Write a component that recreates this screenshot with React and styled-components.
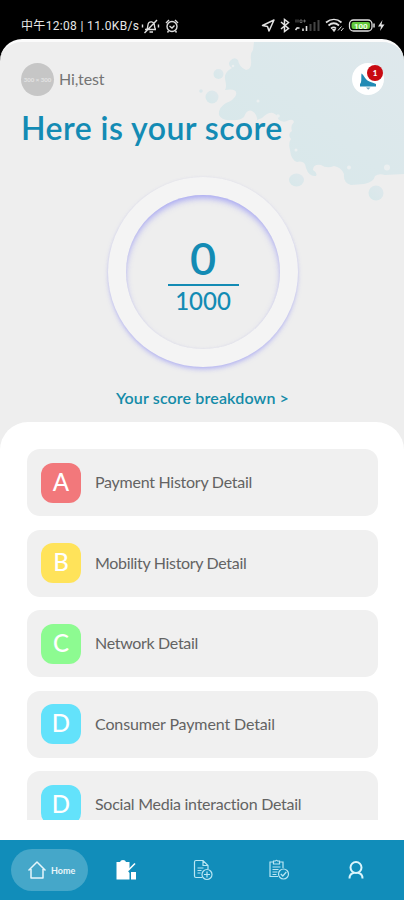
import React from 'react'
import styled, { createGlobalStyle } from 'styled-components'

const GlobalStyle = createGlobalStyle`
  * {
    box-sizing: border-box;
  }
  body {
    margin: 0;
    background: #000;
    font-family: Lato, "Noto Sans CJK SC", sans-serif;
    font-variant-ligatures: none;
  }
`

const Phone = styled.div`
  width: 404px;
  height: 900px;
  display: flex;
  flex-direction: column;
  overflow: hidden;
  background: #000;
`

const StatusBar = styled.header`
  height: 39px;
  flex: none;
  display: flex;
  align-items: center;
  justify-content: space-between;
  padding: 12px 18px 0 21px;
  color: #e6e6e6;
`

const StatusText = styled.span`
  width: 120px;
  font-family: Roboto, "Noto Sans CJK SC", sans-serif;
  font-size: 12px;
  line-height: 16px;
  letter-spacing: 0.33px;
  white-space: nowrap;
`

const StatusGroup = styled.div`
  display: flex;
  align-items: center;
  height: 18px;
`

const Screen = styled.main`
  position: relative;
  flex: 1;
  min-height: 0;
  display: flex;
  flex-direction: column;
  background: #eee;
  border-top: 3px solid #fbfbfb;
  border-radius: 22px 22px 0 0;
  overflow: hidden;
`

const Splash = styled.svg`
  position: absolute;
  top: 0;
  right: 0;
`

const Top = styled.section`
  position: relative;
  height: 380px;
  flex: none;
  display: flex;
  flex-direction: column;
`

const UserRow = styled.div`
  display: flex;
  align-items: center;
  height: 34px;
  margin: 20px 20px 0 21px;
`

const Avatar = styled.div`
  width: 33px;
  height: 33px;
  border-radius: 50%;
  background: #c6c6c6;
  color: #e4e4e4;
  display: flex;
  align-items: center;
  justify-content: center;
  font-size: 6px;
  font-weight: 700;
`

const Greeting = styled.span`
  margin: -2px 0 0 5px;
  flex: 1;
  color: #747474;
  font-size: 16px;
  letter-spacing: -0.15px;
`

const Bell = styled.div`
  position: relative;
  width: 32px;
  height: 32px;
  border-radius: 50%;
  background: #fff;
`

const BellIcon = styled.svg`
  display: block;
`

const Count = styled.span`
  position: absolute;
  top: 2px;
  right: 1px;
  width: 16px;
  height: 16px;
  border-radius: 50%;
  background: #c80a12;
  color: #fff;
  font-size: 8px;
  font-weight: 900;
  line-height: 16px;
  text-align: center;
`

const Title = styled.h1`
  margin: 12px 0 0 21px;
  color: #138bb4;
  font-size: 32px;
  line-height: 40px;
  font-weight: 600;
  letter-spacing: 0.46px;
  white-space: nowrap;
`

const Ring = styled.div`
  width: 190px;
  height: 190px;
  flex: none;
  margin: 29px 0 0 108px;
  padding: 18px;
  border-radius: 50%;
  background: #f4f4f4;
  box-shadow: 0 3px 5px -1px rgba(150, 150, 245, 0.7), 0 0 2px rgba(190, 190, 220, 0.25);
`

const RingInner = styled.div`
  width: 154px;
  height: 154px;
  border-radius: 50%;
  background: #eee;
  box-shadow: inset 0 4px 6px -1px rgba(150, 150, 245, 0.8), inset 0 0 2px rgba(190, 190, 220, 0.3);
  display: flex;
  flex-direction: column;
  align-items: center;
  color: #138bb4;
`

const Score = styled.div`
  margin-top: 37px;
  height: 52px;
  font-size: 45px;
  line-height: 52px;
  font-weight: 600;
`

const Total = styled.div`
  width: 71px;
  border-top: 2px solid #138bb4;
  padding-top: 2px;
  text-align: center;
  font-size: 24px;
  line-height: 26px;
  font-weight: 500;
`

const Breakdown = styled.div`
  margin: 21px 0 0 116px;
  color: #138ba8;
  font-size: 16px;
  line-height: 20px;
  font-weight: 600;
  letter-spacing: 0.14px;
  white-space: nowrap;
`

const Sheet = styled.section`
  position: relative;
  flex: 1;
  min-height: 0;
  padding: 27px 26px 20px 27px;
  background: #fff;
  border-radius: 28px 28px 0 0;
`

const List = styled.div`
  height: 371px;
  overflow: hidden;
  display: flex;
  flex-direction: column;
  gap: 13.5px;
`

const Card = styled.div`
  height: 67px;
  flex: none;
  display: flex;
  align-items: center;
  padding-left: 14px;
  border-radius: 13px;
  background: #f0f0f0;
`

const Grade = styled.div`
  width: 40px;
  height: 40px;
  border-radius: 12px;
  background: ${(props) => props.$color};
  color: #fff;
  font-size: 24px;
  line-height: 38px;
  font-weight: 500;
  text-align: center;
`

const CardLabel = styled.span`
  margin: -2px 0 0 14px;
  color: #636363;
  font-size: 16px;
  letter-spacing: ${(props) => props.$spacing};
  white-space: nowrap;
`

const NavBar = styled.nav`
  height: 60px;
  flex: none;
  display: flex;
  align-items: center;
  padding: 0 10px 0 11px;
  background: #118dba;
`

const HomeTab = styled.div`
  width: 77px;
  height: 42px;
  flex: none;
  display: flex;
  align-items: center;
  padding-left: 16px;
  gap: 4px;
  border-radius: 21px;
  background: #45a7c9;
  color: #eaf6fa;
  font-size: 9px;
  font-weight: 700;
`

const Tab = styled.div`
  flex: 1;
  display: flex;
  justify-content: center;
`

const items = [
  { grade: 'A', color: '#f2787b', label: 'Payment History Detail', spacing: '-0.26px' },
  { grade: 'B', color: '#ffe35a', label: 'Mobility History Detail', spacing: '-0.33px' },
  { grade: 'C', color: '#8dfb91', label: 'Network Detail', spacing: '-0.32px' },
  { grade: 'D', color: '#63e2fb', label: 'Consumer Payment Detail', spacing: '-0.13px' },
  { grade: 'D', color: '#63e2fb', label: 'Social Media interaction Detail', spacing: '-0.26px' },
]

function StatusLeft() {
  return (
    <StatusGroup>
      <StatusText>中午12:08 | 11.0KB/s</StatusText>
      {/* muted bell and alarm clock */}
      <svg width="42" height="18" viewBox="0 0 42 18" fill="none" stroke="#dedede" strokeWidth="1.4">
        <path d="M4 12.500h11M6 12c1.200-2 .3-5 2-6.500 1.500-1.200 4-.7 5 1 .8 1.700 0 4 1.500 5.500M8.500 15h3.500M3.500 16L16 3M1.500 7.500v3M17.500 7.500v3" />
        <circle cx="31" cy="9.500" r="5" />
        <path d="M28.500 9l2.500 2 2.500-2.500M25 6l3-3M37 6l-3-3M27.500 14l-1 1.500M34.500 14l1 1.500" />
      </svg>
    </StatusGroup>
  )
}

function StatusRight() {
  return (
    <svg width="126" height="18" viewBox="260 17 126 18" fill="none" stroke="#e2e2e2">
      <path d="M262.500 25.500L274 20l-5 11-1.500-4.500z" strokeWidth="1.500" strokeLinejoin="round" />
      <path d="M281 22l7.500 6.500-4 3v-12l4 3-7.500 6.500" strokeWidth="1.500" />
      <path d="M296 19.500v3M298 19.500v3M300 20h2v2.500h-2zM304.500 19.500v3M303 21h3" strokeWidth=".8" stroke="#777" />
      <path d="M295.500 30l2-2.500M297.500 28h2M303 31v-2.500M306.500 31v-5" strokeWidth="1.600" />
      <path d="M310.500 31v-7M314.500 31v-9M318.500 31v-11" strokeWidth="2" stroke="#444" />
      <path d="M326 22.500c5-4 11-4 15.500 0M328.500 25.500c3.500-3 7-3 10.500 0M331 28.500c2-1.500 3.500-1.500 5 0" strokeWidth="1.700" />
      <path d="M334 31.500l-1.500-2h3z" fill="#e2e2e2" />
      <path d="M338 30.500l3.500-4M341 31l2.500-3" strokeWidth="1" />
      <rect x="349.500" y="20" width="22.500" height="11" rx="4" strokeWidth="1.300" />
      <rect x="351.500" y="22" width="18.500" height="7" rx="2" fill="#62c83c" stroke="none" />
      <path d="M374 23.500v4" strokeWidth="1.500" />
      <text x="360.800" y="28.500" fontSize="8" fontFamily="Roboto" fontWeight="700" textAnchor="middle" fill="#f2ffe9" stroke="none">100</text>
      <path d="M382.500 20l-4.500 6.500h3l-1 4.500 4.500-6.500h-3z" fill="#e2e2e2" stroke="none" />
    </svg>
  )
}

function PaintSplash() {
  return (
    <Splash width="224" height="168" viewBox="180 42 224 168">
      <defs>
        <linearGradient id="paint" x1="0" y1="1" x2="1" y2="0">
          <stop offset="0" stopColor="#d7e8ea" />
          <stop offset="1" stopColor="#dfe8ec" />
        </linearGradient>
      </defs>
      <g fill="url(#paint)">
        <path d="M254 42L253 50Q250 53 251 60Q252 69 246 70Q239 67 238 60Q234 56 230 61Q227 65 232 68Q224 72 225 79Q227 87 225 90Q238 88 236 95Q234 100 226 103Q218 108 219 115Q222 121 231 120Q239 121 244 117Q247 109 252 111Q258 115 257 120L262 118Q268 112 273 113Q279 116 278 119Q282 123 287 121Q293 118 294 122Q290 126 292 131Q287 134 291 139Q288 143 290 150Q291 160 297 162Q305 160 306 168Q309 177 316 176Q318 173 313 170Q313 164 321 165Q327 169 334 166Q341 167 344 174Q343 183 351 185L364 184Q374 182 375 176Q379 173 385 175L404 174V42Z" />
        <circle cx="212" cy="97" r="6.500" />
        <circle cx="218.500" cy="74" r="5" />
        <circle cx="201" cy="91" r="1.800" />
        <ellipse cx="296.500" cy="180" rx="7.500" ry="6.500" />
        <circle cx="376" cy="193" r="7.500" />
      </g>
      <g fill="#ebeff0">
        <circle cx="387" cy="167.500" r="3" />
        <circle cx="349" cy="167.500" r="2" />
        <circle cx="296" cy="150" r="1.500" />
        <circle cx="278" cy="116" r="1.800" />
        <circle cx="258" cy="101" r="1.500" />
        <circle cx="233" cy="66" r="1.300" />
      </g>
    </Splash>
  )
}

function App() {
  return (
    <>
      <GlobalStyle />
      <Phone>
        <StatusBar>
          <StatusLeft />
          <StatusRight />
        </StatusBar>
        <Screen>
          <PaintSplash />
          <Top>
            <UserRow>
              <Avatar>300 × 300</Avatar>
              <Greeting>Hi,test</Greeting>
              <Bell>
                <BellIcon width="32" height="32" viewBox="0 0 32 32" fill="#218bb5">
                  <path d="M9.500 10.500c2 1 3 4.500 6 7 2.500 1.500 5 2 8.500 3.500v2.500H8v-2.500c2-1.500 1-6.500 1.500-10.500z" />
                  <path d="M14 24.500h4.500l-2.200 2.200z" fill="#7faec2" />
                </BellIcon>
                <Count>1</Count>
              </Bell>
            </UserRow>
            <Title>Here is your score</Title>
            <Ring>
              <RingInner>
                <Score>0</Score>
                <Total>1000</Total>
              </RingInner>
            </Ring>
            <Breakdown>Your score breakdown &gt;</Breakdown>
          </Top>
          <Sheet>
            <List>
              {items.map((item) => (
                <Card key={item.label}>
                  <Grade $color={item.color}>{item.grade}</Grade>
                  <CardLabel $spacing={item.spacing}>{item.label}</CardLabel>
                </Card>
              ))}
            </List>
          </Sheet>
          <NavBar>
            <HomeTab>
              <svg width="20" height="20" viewBox="0 0 20 20" fill="none" stroke="#e6f6fb" strokeWidth="1.500" strokeLinejoin="round">
                <path d="M1.500 10.500L10 2l8.500 8.500M4 9v9h12V9" />
              </svg>
              Home
            </HomeTab>
            <Tab>
              <svg width="22" height="22" viewBox="0 0 22 22" fill="#fff">
                <path d="M1.500 3H5q.5-2 3-2t3 2h3.500v7l-1.500 2 1.500 2v6.500H1.500z" />
                <path d="M13 11.500l7-7" stroke="#fff" strokeWidth="1.600" />
                <rect x="16" y="13" width="5" height="7.500" />
              </svg>
            </Tab>
            <Tab>
              <svg width="20" height="22" viewBox="0 0 20 22" fill="none" stroke="#b9e6f3" strokeWidth="1.200">
                <path d="M9 18.500H3q-1.500 0-1.500-1.500V3Q1.500 1.500 3 1.500h7l5 5V10M10 1.500v5h5M4.500 9h6M4.500 11.500h4M4.500 14h3" />
                <circle cx="14" cy="15.500" r="5" />
                <path d="M14 12.500v6M11 15.500h6" />
              </svg>
            </Tab>
            <Tab>
              <svg width="22" height="22" viewBox="0 0 22 22" fill="none" stroke="#b9e6f3" strokeWidth="1.200">
                <path d="M10 17.500H2V3h3.500M11.500 3H15v6M5.500 2h2q1-1.500 2 0h2v3h-6zM4.500 8h8M4.500 10.500h6M4.500 13h5M4.500 15.500h4" />
                <circle cx="15.500" cy="15" r="5" />
                <path d="M12.800 15l2 2 3.500-4" />
              </svg>
            </Tab>
            <Tab>
              <svg width="16" height="20" viewBox="0 0 16 20" fill="none" stroke="#dbf5fc" strokeWidth="2">
                <circle cx="8" cy="7.500" r="5.500" />
                <path d="M1.500 18.500c0-3.500 2-5.500 5-5.800M14.500 18.500c0-3.500-2-5.500-5-5.800" />
              </svg>
            </Tab>
          </NavBar>
        </Screen>
      </Phone>
    </>
  )
}

export default App
